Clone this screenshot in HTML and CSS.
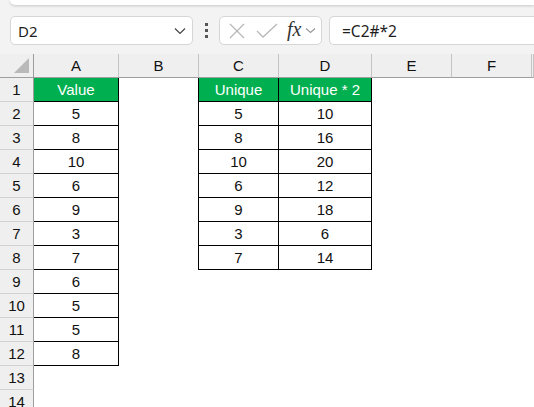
FILE: index.html
```html
<!DOCTYPE html>
<html lang="en">
<head>
  <meta charset="UTF-8">
  <title>Sheet</title>
  <link rel="stylesheet" href="styles.css">
</head>
<body>

  <div class="topbar"></div>

  <!-- formula bar -->
  <div class="fbar">
    <div class="box namebox">
      <span>D2</span>
      <svg class="chev" width="12" height="8" viewBox="0 0 12 8"><path d="M1 1.5 L6 6.5 L11 1.5" fill="none" stroke="#444" stroke-width="1.2"/></svg>
    </div>
    <div class="dots"><i></i><i></i><i></i></div>
    <div class="box fxbox">
      <svg width="18" height="18" viewBox="0 0 18 18"><path d="M2 2 L16 16 M16 2 L2 16" stroke="#b8b8b8" stroke-width="1.3"/></svg>
      <svg width="22" height="18" viewBox="0 0 22 18"><path d="M1 9 L7 15 L21 2" fill="none" stroke="#b8b8b8" stroke-width="1.3"/></svg>
      <span class="fx">fx</span>
      <svg width="11" height="7" viewBox="0 0 11 7"><path d="M1 1.5 L5.5 5.5 L10 1.5" fill="none" stroke="#999" stroke-width="1.1"/></svg>
    </div>
    <div class="box formula">=C2#*2</div>
  </div>

  <!-- sheet -->
  <div class="sheet">
    <div class="corner"><span class="tri"></span></div>
    <div class="ch">A</div><div class="ch">B</div><div class="ch">C</div><div class="ch">D</div><div class="ch">E</div><div class="ch">F</div><div class="ch"></div>

    <div class="rh">1</div><div class="hd t">Value</div><div class="c"></div><div class="hd t tl">Unique</div><div class="hd t">Unique * 2</div><div class="c"></div><div class="c"></div><div class="c"></div>
    <div class="rh">2</div><div class="t">5</div><div class="c"></div><div class="t tl">5</div><div class="t">10</div><div class="c"></div><div class="c"></div><div class="c"></div>
    <div class="rh">3</div><div class="t">8</div><div class="c"></div><div class="t tl">8</div><div class="t">16</div><div class="c"></div><div class="c"></div><div class="c"></div>
    <div class="rh">4</div><div class="t">10</div><div class="c"></div><div class="t tl">10</div><div class="t">20</div><div class="c"></div><div class="c"></div><div class="c"></div>
    <div class="rh">5</div><div class="t">6</div><div class="c"></div><div class="t tl">6</div><div class="t">12</div><div class="c"></div><div class="c"></div><div class="c"></div>
    <div class="rh">6</div><div class="t">9</div><div class="c"></div><div class="t tl">9</div><div class="t">18</div><div class="c"></div><div class="c"></div><div class="c"></div>
    <div class="rh">7</div><div class="t">3</div><div class="c"></div><div class="t tl">3</div><div class="t">6</div><div class="c"></div><div class="c"></div><div class="c"></div>
    <div class="rh">8</div><div class="t">7</div><div class="c"></div><div class="t tl">7</div><div class="t">14</div><div class="c"></div><div class="c"></div><div class="c"></div>
    <div class="rh">9</div><div class="t">6</div><div class="c"></div><div class="c"></div><div class="c"></div><div class="c"></div><div class="c"></div><div class="c"></div>
    <div class="rh">10</div><div class="t">5</div><div class="c"></div><div class="c"></div><div class="c"></div><div class="c"></div><div class="c"></div><div class="c"></div>
    <div class="rh">11</div><div class="t">5</div><div class="c"></div><div class="c"></div><div class="c"></div><div class="c"></div><div class="c"></div><div class="c"></div>
    <div class="rh">12</div><div class="t">8</div><div class="c"></div><div class="c"></div><div class="c"></div><div class="c"></div><div class="c"></div><div class="c"></div>
    <div class="rh">13</div><div class="c"></div><div class="c"></div><div class="c"></div><div class="c"></div><div class="c"></div><div class="c"></div><div class="c"></div>
    <div class="rh">14</div><div class="c"></div><div class="c"></div><div class="c"></div><div class="c"></div><div class="c"></div><div class="c"></div><div class="c"></div>
  </div>

</body>
</html>
```

FILE: styles.css
```css
body {
  margin: 0;
  background: #f3f3f3;
  font-family: "Noto Sans", sans-serif;
  overflow: hidden;
  width: 534px;
  height: 407px;
}

.topbar {
  height: 5px;
  margin-left: 10px;
  background: #fff;
  border-bottom-left-radius: 7px;
  box-shadow: 0 1px 3px rgba(0, 0, 0, 0.18);
}

.fbar {
  display: flex;
  align-items: center;
  height: 29px;
  margin-top: 11px;
  padding-left: 10px;
  white-space: nowrap;
}

.box {
  box-sizing: border-box;
  height: 29px;
  background: #fff;
  border: 1px solid #d6d6d6;
  border-radius: 5px;
  display: flex;
  align-items: center;
}

.namebox {
  width: 183px;
  padding: 0 6px 0 7px;
  justify-content: space-between;
  font-size: 15px;
  color: #1e1e1e;
}

.dots {
  width: 26px;
  display: flex;
  flex-direction: column;
  align-items: center;
  gap: 3px;
}
.dots i {
  width: 3px;
  height: 3px;
  background: #555;
}

.fxbox {
  width: 103px;
  padding-left: 8px;
  gap: 4px;
}
.fxbox svg:nth-child(2) { margin-left: 6px; }
.fx {
  font-family: "Liberation Serif", serif;
  font-style: italic;
  font-size: 20px;
  color: #333;
  margin-left: 5px;
  margin-top: -2px;
}

.formula {
  flex: 1;
  margin-left: 7px;
  padding-left: 12px;
  border-right: none;
  border-radius: 5px 0 0 5px;
  font-size: 15.5px;
  color: #1e1e1e;
}

.sheet {
  display: grid;
  grid-template-columns: 34px 85px 80px 80px 93px 80px 80px 2px;
  grid-auto-rows: 24px;
  margin-top: 9px;
  font-family: "Liberation Sans", sans-serif;
  font-size: 15px;
}

.sheet > div {
  box-sizing: border-box;
  display: flex;
  align-items: center;
  justify-content: center;
  color: #111;
}

.corner {
  position: relative;
  background: #efefef;
  border-right: 1px solid #9e9e9e;
  border-bottom: 1px solid #9e9e9e;
}
.tri {
  position: absolute;
  right: 4px;
  bottom: 4px;
  width: 0;
  height: 0;
  border-left: 15px solid transparent;
  border-bottom: 15px solid #b9b9b9;
}

.ch {
  background: #efefef;
  border-right: 1px solid #c4c4c4;
  border-bottom: 1px solid #9e9e9e;
  color: #1f1f1f;
}

.rh {
  background: #efefef;
  border-right: 1px solid #9e9e9e;
  border-bottom: 1px solid #d2d2d2;
  color: #1f1f1f;
}

.c { background: #fff; }

.t {
  background: #fff;
  border-right: 1px solid #000;
  border-bottom: 1px solid #000;
}
.tl { box-shadow: -1px 0 0 #000; }

.hd {
  background: #00b050;
  color: #fff !important;
}
```
